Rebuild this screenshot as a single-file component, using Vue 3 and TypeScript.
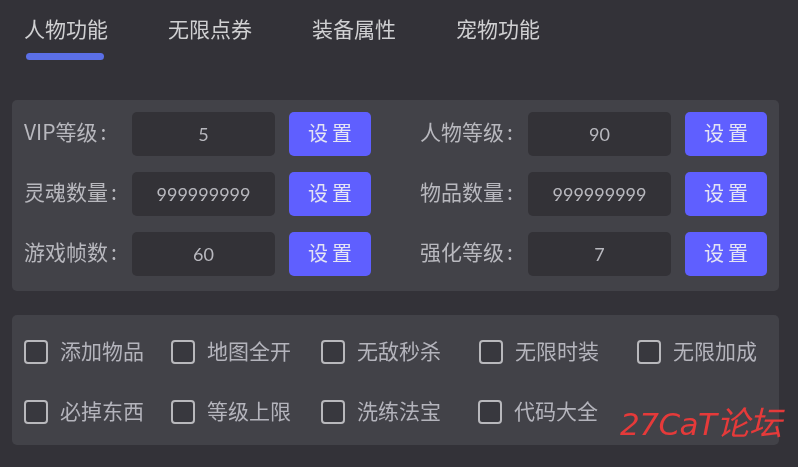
<template>
  <div class="page">
    <nav class="tabs">
      <div v-for="(tab, i) in tabs" :key="tab" class="tab" :class="{ active: i === 0 }">{{ tab }}</div>
    </nav>

    <section class="panel settings">
      <div v-for="f in fields" :key="f.label" class="field">
        <label class="field-label">{{ f.label }}<span class="colon">:</span></label>
        <input class="field-input" :value="f.value" />
        <button class="set-btn">设置</button>
      </div>
    </section>

    <section class="panel checks">
      <label v-for="(c, i) in checks" :key="c" class="check" :class="{ tight: i === 8 }">
        <span class="box"></span>
        <span class="check-text">{{ c }}</span>
      </label>
    </section>

    <div class="watermark">27CaT<span class="wm-cjk">论坛</span></div>
  </div>
</template>

<script setup lang="ts">
const tabs: string[] = ['人物功能', '无限点券', '装备属性', '宠物功能']

const fields: { label: string; value: string }[] = [
  { label: 'VIP等级', value: '5' },
  { label: '人物等级', value: '90' },
  { label: '灵魂数量', value: '999999999' },
  { label: '物品数量', value: '999999999' },
  { label: '游戏帧数', value: '60' },
  { label: '强化等级', value: '7' }
]

const checks: string[] = [
  '添加物品', '地图全开', '无敌秒杀', '无限时装', '无限加成',
  '必掉东西', '等级上限', '洗练法宝', '代码大全'
]
</script>

<style>
html, body {
  margin: 0;
  background: #333238;
}
</style>

<style scoped>
.page {
  position: relative;
  box-sizing: border-box;
  width: 798px;
  height: 467px;
  overflow: hidden;
  padding: 0 19px 0 12px;
  background: #333238;
  font-family: "Noto Sans CJK SC", "Noto Sans", sans-serif;
  color: #b8b8be;
  filter: blur(0.45px);
}

.tabs {
  display: flex;
  gap: 60px;
  height: 100px;
  padding-left: 12px;
  box-sizing: border-box;
}

.tab {
  position: relative;
  width: 84px;
  padding-top: 13px;
  font-size: 21px;
  line-height: 31px;
  color: #d0d0d2;
}

.tab.active::after {
  content: "";
  position: absolute;
  left: 2px;
  top: 53px;
  width: 78px;
  height: 7px;
  border-radius: 4px;
  background: #5b6fe6;
}

.panel {
  background: #424248;
  border-radius: 5px;
}

.settings {
  display: grid;
  grid-template-columns: 396px 1fr;
  align-content: start;
  row-gap: 16px;
  height: 191px;
  box-sizing: border-box;
  padding: 12px;
}

.field {
  display: flex;
  align-items: center;
}

.field-label {
  width: 108px;
  flex: none;
  padding-bottom: 5px;
  font-size: 21px;
  line-height: 39px;
  white-space: nowrap;
  color: #b8b8be;
}

.colon {
  padding-left: 3px;
}

.field-input {
  box-sizing: border-box;
  width: 143px;
  height: 44px;
  border: none;
  outline: none;
  padding: 0;
  border-radius: 5px;
  background: #333237;
  color: #b8b8be;
  font-family: Lato, "Noto Sans", sans-serif;
  font-size: 18px;
  text-align: center;
}

.set-btn {
  width: 82px;
  height: 44px;
  margin-left: 14px;
  border: none;
  padding: 0 0 4px 4px;
  border-radius: 5px;
  background: #5f5fff;
  color: #e4e4f4;
  font-family: inherit;
  font-size: 20px;
  letter-spacing: 4px;
}

.checks {
  display: grid;
  grid-template-columns: 147px 150px 158px 158px 1fr;
  grid-auto-rows: 60px;
  height: 130px;
  margin-top: 24px;
  box-sizing: border-box;
  padding: 7px 12px 0;
}

.check {
  display: flex;
  align-items: center;
  gap: 12px;
}

.check.tight {
  margin-left: -1px;
}

.box {
  box-sizing: border-box;
  width: 24px;
  height: 24px;
  border: 2px solid #b8b8bc;
  border-radius: 4px;
  background: #38383e;
}

.check-text {
  padding-bottom: 4px;
  font-size: 21px;
  color: #b4b4bc;
  white-space: nowrap;
}

.watermark {
  position: absolute;
  left: 620px;
  top: 402px;
  font-family: "DejaVu Sans", "Noto Sans CJK SC", sans-serif;
  font-size: 31px;
  font-style: italic;
  line-height: 44px;
  letter-spacing: -0.5px;
  color: #e53a3a;
  white-space: nowrap;
}

.wm-cjk {
  font-size: 33px;
}
</style>
